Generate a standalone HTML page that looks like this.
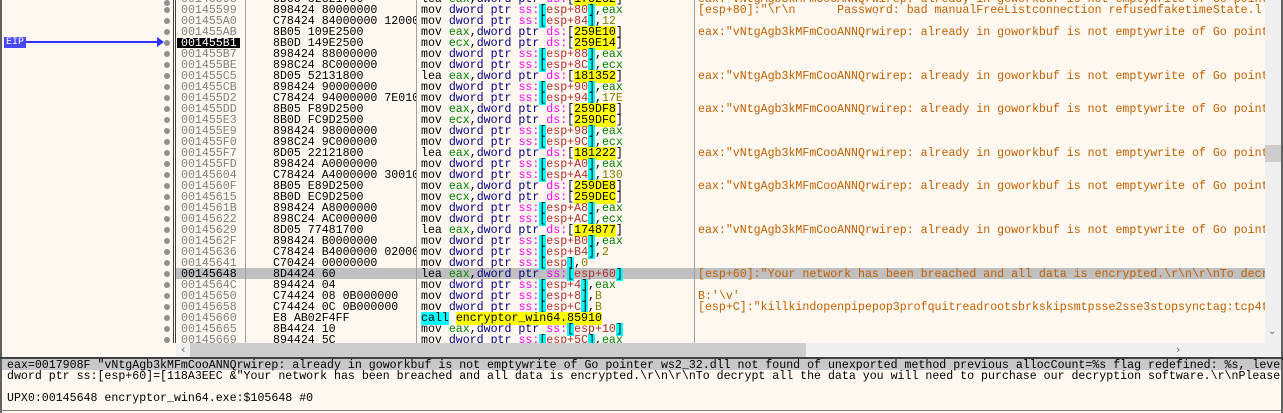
<!DOCTYPE html>
<html><head><meta charset="utf-8"><style>
*{margin:0;padding:0}
body{width:1283px;height:413px;background:#fff8f0;position:relative;overflow:hidden;font-family:"Liberation Mono",monospace;font-size:11.6px;line-height:11px}
.abs{position:absolute}
#tbl{position:absolute;left:176px;top:0;width:1089px;height:343px;overflow:hidden}
.r{position:absolute;left:0;width:1089px;height:11px;white-space:pre}
.r>span{top:1px}
.ad{position:absolute;left:5px;color:#808080}
.by{position:absolute;left:97px;width:143px;overflow:hidden;color:#000}
.in{position:absolute;left:245px;color:#000}
.cm{position:absolute;left:522px;color:#c06000}
.k{color:#000080}.s{color:#ff00ff}.g{color:#008000}.b{background:#00ffff}.o{color:#b03030}.n{color:#808000}.y{background:#ffff00}
.dot{position:absolute;left:164px;width:6px;height:6px;border-radius:3px;background:#909090}
.vl{position:absolute;top:0;height:343px;width:1px;background:#a0a0a0}
</style></head><body>
<div class="abs" style="left:0;top:0;width:2px;height:358px;background:#606060"></div>
<div class="abs" style="left:173px;top:0;width:1px;height:343px;background:#404040"></div>
<div class="abs" style="left:175px;top:0;width:1px;height:343px;background:#404040"></div>
<div class="abs" style="left:4px;top:37px;width:22px;height:11px;background:#4848ff;color:#fff;font-size:10px;line-height:11px;text-align:center;overflow:hidden">EIP</div>
<div class="abs" style="left:26px;top:41px;width:135px;height:2px;background:#3030ff"></div>
<div class="abs" style="left:157px;top:37px;width:0;height:0;border-left:7px solid #3030ff;border-top:5px solid transparent;border-bottom:5px solid transparent"></div>
<div class="dot" style="top:0px"></div><div class="dot" style="top:7px"></div><div class="dot" style="top:18px"></div><div class="dot" style="top:29px"></div><div class="dot" style="top:40px"></div><div class="dot" style="top:51px"></div><div class="dot" style="top:62px"></div><div class="dot" style="top:73px"></div><div class="dot" style="top:84px"></div><div class="dot" style="top:95px"></div><div class="dot" style="top:106px"></div><div class="dot" style="top:117px"></div><div class="dot" style="top:128px"></div><div class="dot" style="top:139px"></div><div class="dot" style="top:150px"></div><div class="dot" style="top:161px"></div><div class="dot" style="top:172px"></div><div class="dot" style="top:183px"></div><div class="dot" style="top:194px"></div><div class="dot" style="top:205px"></div><div class="dot" style="top:216px"></div><div class="dot" style="top:227px"></div><div class="dot" style="top:238px"></div><div class="dot" style="top:249px"></div><div class="dot" style="top:260px"></div><div class="dot" style="top:271px"></div><div class="dot" style="top:282px"></div><div class="dot" style="top:293px"></div><div class="dot" style="top:304px"></div><div class="dot" style="top:315px"></div><div class="dot" style="top:326px"></div><div class="dot" style="top:337px"></div>
<div id="tbl">
<div class="abs" style="left:0;top:268px;width:1089px;height:11px;background:#c0c0c0"></div>
<div class="abs" style="left:1px;top:38px;width:63px;height:10px;background:#000"></div>
<div class="vl" style="left:69px"></div><div class="vl" style="left:240px"></div><div class="vl" style="left:518px"></div>
<div class="r" style="top:-7px"><span class="ad">00145593</span><span class="by">8D05 82821700</span><span class="in">lea <span class="g">eax</span>,<span class="k">dword ptr</span> <span class="s">ds:</span>[<span class="y">178282</span>]</span><span class="cm">eax:"vNtgAgb3kMFmCooANNQrwirep: already in goworkbuf is not emptywrite of Go pointer ws2_32.dll</span></div>
<div class="r" style="top:4px"><span class="ad">00145599</span><span class="by">898424 80000000</span><span class="in">mov <span class="k">dword ptr</span> <span class="s">ss:</span><span class="b">[</span><span class="o">esp+80</span><span class="b">]</span>,<span class="g">eax</span></span><span class="cm">[esp+80]:"\r\n      Password: bad manualFreeListconnection refusedfaketimeState.l</span></div>
<div class="r" style="top:15px"><span class="ad">001455A0</span><span class="by">C78424 84000000 12000000</span><span class="in">mov <span class="k">dword ptr</span> <span class="s">ss:</span><span class="b">[</span><span class="o">esp+84</span><span class="b">]</span>,<span class="n">12</span></span></div>
<div class="r" style="top:26px"><span class="ad">001455AB</span><span class="by">8B05 109E2500</span><span class="in">mov <span class="g">eax</span>,<span class="k">dword ptr</span> <span class="s">ds:</span>[<span class="y">259E10</span>]</span><span class="cm">eax:"vNtgAgb3kMFmCooANNQrwirep: already in goworkbuf is not emptywrite of Go pointer ws2_32.dll</span></div>
<div class="r" style="top:37px"><span class="ad" style="color:#fff">001455B1</span><span class="by">8B0D 149E2500</span><span class="in">mov <span class="g">ecx</span>,<span class="k">dword ptr</span> <span class="s">ds:</span>[<span class="y">259E14</span>]</span></div>
<div class="r" style="top:48px"><span class="ad">001455B7</span><span class="by">898424 88000000</span><span class="in">mov <span class="k">dword ptr</span> <span class="s">ss:</span><span class="b">[</span><span class="o">esp+88</span><span class="b">]</span>,<span class="g">eax</span></span></div>
<div class="r" style="top:59px"><span class="ad">001455BE</span><span class="by">898C24 8C000000</span><span class="in">mov <span class="k">dword ptr</span> <span class="s">ss:</span><span class="b">[</span><span class="o">esp+8C</span><span class="b">]</span>,<span class="g">ecx</span></span></div>
<div class="r" style="top:70px"><span class="ad">001455C5</span><span class="by">8D05 52131800</span><span class="in">lea <span class="g">eax</span>,<span class="k">dword ptr</span> <span class="s">ds:</span>[<span class="y">181352</span>]</span><span class="cm">eax:"vNtgAgb3kMFmCooANNQrwirep: already in goworkbuf is not emptywrite of Go pointer ws2_32.dll</span></div>
<div class="r" style="top:81px"><span class="ad">001455CB</span><span class="by">898424 90000000</span><span class="in">mov <span class="k">dword ptr</span> <span class="s">ss:</span><span class="b">[</span><span class="o">esp+90</span><span class="b">]</span>,<span class="g">eax</span></span></div>
<div class="r" style="top:92px"><span class="ad">001455D2</span><span class="by">C78424 94000000 7E010000</span><span class="in">mov <span class="k">dword ptr</span> <span class="s">ss:</span><span class="b">[</span><span class="o">esp+94</span><span class="b">]</span>,<span class="n">17E</span></span></div>
<div class="r" style="top:103px"><span class="ad">001455DD</span><span class="by">8B05 F89D2500</span><span class="in">mov <span class="g">eax</span>,<span class="k">dword ptr</span> <span class="s">ds:</span>[<span class="y">259DF8</span>]</span><span class="cm">eax:"vNtgAgb3kMFmCooANNQrwirep: already in goworkbuf is not emptywrite of Go pointer ws2_32.dll</span></div>
<div class="r" style="top:114px"><span class="ad">001455E3</span><span class="by">8B0D FC9D2500</span><span class="in">mov <span class="g">ecx</span>,<span class="k">dword ptr</span> <span class="s">ds:</span>[<span class="y">259DFC</span>]</span></div>
<div class="r" style="top:125px"><span class="ad">001455E9</span><span class="by">898424 98000000</span><span class="in">mov <span class="k">dword ptr</span> <span class="s">ss:</span><span class="b">[</span><span class="o">esp+98</span><span class="b">]</span>,<span class="g">eax</span></span></div>
<div class="r" style="top:136px"><span class="ad">001455F0</span><span class="by">898C24 9C000000</span><span class="in">mov <span class="k">dword ptr</span> <span class="s">ss:</span><span class="b">[</span><span class="o">esp+9C</span><span class="b">]</span>,<span class="g">ecx</span></span></div>
<div class="r" style="top:147px"><span class="ad">001455F7</span><span class="by">8D05 22121800</span><span class="in">lea <span class="g">eax</span>,<span class="k">dword ptr</span> <span class="s">ds:</span>[<span class="y">181222</span>]</span><span class="cm">eax:"vNtgAgb3kMFmCooANNQrwirep: already in goworkbuf is not emptywrite of Go pointer ws2_32.dll</span></div>
<div class="r" style="top:158px"><span class="ad">001455FD</span><span class="by">898424 A0000000</span><span class="in">mov <span class="k">dword ptr</span> <span class="s">ss:</span><span class="b">[</span><span class="o">esp+A0</span><span class="b">]</span>,<span class="g">eax</span></span></div>
<div class="r" style="top:169px"><span class="ad">00145604</span><span class="by">C78424 A4000000 30010000</span><span class="in">mov <span class="k">dword ptr</span> <span class="s">ss:</span><span class="b">[</span><span class="o">esp+A4</span><span class="b">]</span>,<span class="n">130</span></span></div>
<div class="r" style="top:180px"><span class="ad">0014560F</span><span class="by">8B05 E89D2500</span><span class="in">mov <span class="g">eax</span>,<span class="k">dword ptr</span> <span class="s">ds:</span>[<span class="y">259DE8</span>]</span><span class="cm">eax:"vNtgAgb3kMFmCooANNQrwirep: already in goworkbuf is not emptywrite of Go pointer ws2_32.dll</span></div>
<div class="r" style="top:191px"><span class="ad">00145615</span><span class="by">8B0D EC9D2500</span><span class="in">mov <span class="g">ecx</span>,<span class="k">dword ptr</span> <span class="s">ds:</span>[<span class="y">259DEC</span>]</span></div>
<div class="r" style="top:202px"><span class="ad">0014561B</span><span class="by">898424 A8000000</span><span class="in">mov <span class="k">dword ptr</span> <span class="s">ss:</span><span class="b">[</span><span class="o">esp+A8</span><span class="b">]</span>,<span class="g">eax</span></span></div>
<div class="r" style="top:213px"><span class="ad">00145622</span><span class="by">898C24 AC000000</span><span class="in">mov <span class="k">dword ptr</span> <span class="s">ss:</span><span class="b">[</span><span class="o">esp+AC</span><span class="b">]</span>,<span class="g">ecx</span></span></div>
<div class="r" style="top:224px"><span class="ad">00145629</span><span class="by">8D05 77481700</span><span class="in">lea <span class="g">eax</span>,<span class="k">dword ptr</span> <span class="s">ds:</span>[<span class="y">174877</span>]</span><span class="cm">eax:"vNtgAgb3kMFmCooANNQrwirep: already in goworkbuf is not emptywrite of Go pointer ws2_32.dll</span></div>
<div class="r" style="top:235px"><span class="ad">0014562F</span><span class="by">898424 B0000000</span><span class="in">mov <span class="k">dword ptr</span> <span class="s">ss:</span><span class="b">[</span><span class="o">esp+B0</span><span class="b">]</span>,<span class="g">eax</span></span></div>
<div class="r" style="top:246px"><span class="ad">00145636</span><span class="by">C78424 B4000000 02000000</span><span class="in">mov <span class="k">dword ptr</span> <span class="s">ss:</span><span class="b">[</span><span class="o">esp+B4</span><span class="b">]</span>,<span class="n">2</span></span></div>
<div class="r" style="top:257px"><span class="ad">00145641</span><span class="by">C70424 00000000</span><span class="in">mov <span class="k">dword ptr</span> <span class="s">ss:</span><span class="b">[</span><span class="o">esp</span><span class="b">]</span>,<span class="n">0</span></span></div>
<div class="r" style="top:268px"><span class="ad" style="color:#000">00145648</span><span class="by">8D4424 60</span><span class="in">lea <span class="g">eax</span>,<span class="k">dword ptr</span> <span class="s">ss:</span><span class="b">[</span><span class="o">esp+60</span><span class="b">]</span></span><span class="cm">[esp+60]:"Your network has been breached and all data is encrypted.\r\n\r\nTo decrypt all</span></div>
<div class="r" style="top:279px"><span class="ad">0014564C</span><span class="by">894424 04</span><span class="in">mov <span class="k">dword ptr</span> <span class="s">ss:</span><span class="b">[</span><span class="o">esp+4</span><span class="b">]</span>,<span class="g">eax</span></span></div>
<div class="r" style="top:290px"><span class="ad">00145650</span><span class="by">C74424 08 0B000000</span><span class="in">mov <span class="k">dword ptr</span> <span class="s">ss:</span><span class="b">[</span><span class="o">esp+8</span><span class="b">]</span>,<span class="n">B</span></span><span class="cm">B:'\v'</span></div>
<div class="r" style="top:301px"><span class="ad">00145658</span><span class="by">C74424 0C 0B000000</span><span class="in">mov <span class="k">dword ptr</span> <span class="s">ss:</span><span class="b">[</span><span class="o">esp+C</span><span class="b">]</span>,<span class="n">B</span></span><span class="cm">[esp+C]:"killkindopenpipepop3profquitreadrootsbrkskipsmtpsse2sse3stopsynctag:tcp4tcp6</span></div>
<div class="r" style="top:312px"><span class="ad">00145660</span><span class="by">E8 AB02F4FF</span><span class="in"><span class="b">call</span> <span class="y">encryptor_win64.85910</span></span></div>
<div class="r" style="top:323px"><span class="ad">00145665</span><span class="by">8B4424 10</span><span class="in">mov <span class="g">eax</span>,<span class="k">dword ptr</span> <span class="s">ss:</span><span class="b">[</span><span class="o">esp+10</span><span class="b">]</span></span></div>
<div class="r" style="top:334px"><span class="ad">00145669</span><span class="by">894424 5C</span><span class="in">mov <span class="k">dword ptr</span> <span class="s">ss:</span><span class="b">[</span><span class="o">esp+5C</span><span class="b">]</span>,<span class="g">eax</span></span></div>
</div>
<div class="abs" style="left:1265px;top:0;width:16px;height:343px;background:#f0f0f0"></div>
<div class="abs" style="left:1265px;top:145px;width:16px;height:17px;background:#cdcdcd"></div>
<div class="abs" style="left:1268px;top:326px;color:#707070;font-family:'DejaVu Sans',sans-serif;font-size:10px">&#8964;</div>
<div class="abs" style="left:1281px;top:0;width:2px;height:413px;background:#606060"></div>
<div class="abs" style="left:176px;top:343px;width:1105px;height:14px;background:#f0f0f0"></div>
<div class="abs" style="left:190px;top:343px;width:616px;height:14px;background:#cdcdcd"></div>
<div class="abs" style="left:181px;top:344px;color:#606060;font-family:'DejaVu Sans',sans-serif;font-size:11px;line-height:12px">&lsaquo;</div>
<div class="abs" style="left:1176px;top:344px;color:#606060;font-family:'DejaVu Sans',sans-serif;font-size:11px;line-height:12px">&rsaquo;</div>
<div class="abs" style="left:0;top:357px;width:1283px;height:2px;background:#404040"></div>
<div class="abs" style="left:2px;top:359px;width:1279px;height:11px;background:#c8c8c8"></div>
<div class="abs" style="left:0;top:359px;width:2px;height:54px;background:#606060"></div>
<div class="abs" style="left:0;top:410px;width:1283px;height:1px;background:#808080"></div>
<div class="abs" style="left:7px;top:360px;white-space:pre;color:#000">eax=0017908F "vNtgAgb3kMFmCooANNQrwirep: already in goworkbuf is not emptywrite of Go pointer ws2_32.dll not found of unexported method previous allocCount=%s flag redefined: %s, level</div>
<div class="abs" style="left:7px;top:371px;white-space:pre;color:#000">dword ptr ss:[esp+60]=[118A3EEC &amp;"Your network has been breached and all data is encrypted.\r\n\r\nTo decrypt all the data you will need to purchase our decryption software.\r\nPlease</div>
<div class="abs" style="left:7px;top:393px;white-space:pre;color:#000">UPX0:00145648 encryptor_win64.exe:$105648 #0</div>
</body></html>
